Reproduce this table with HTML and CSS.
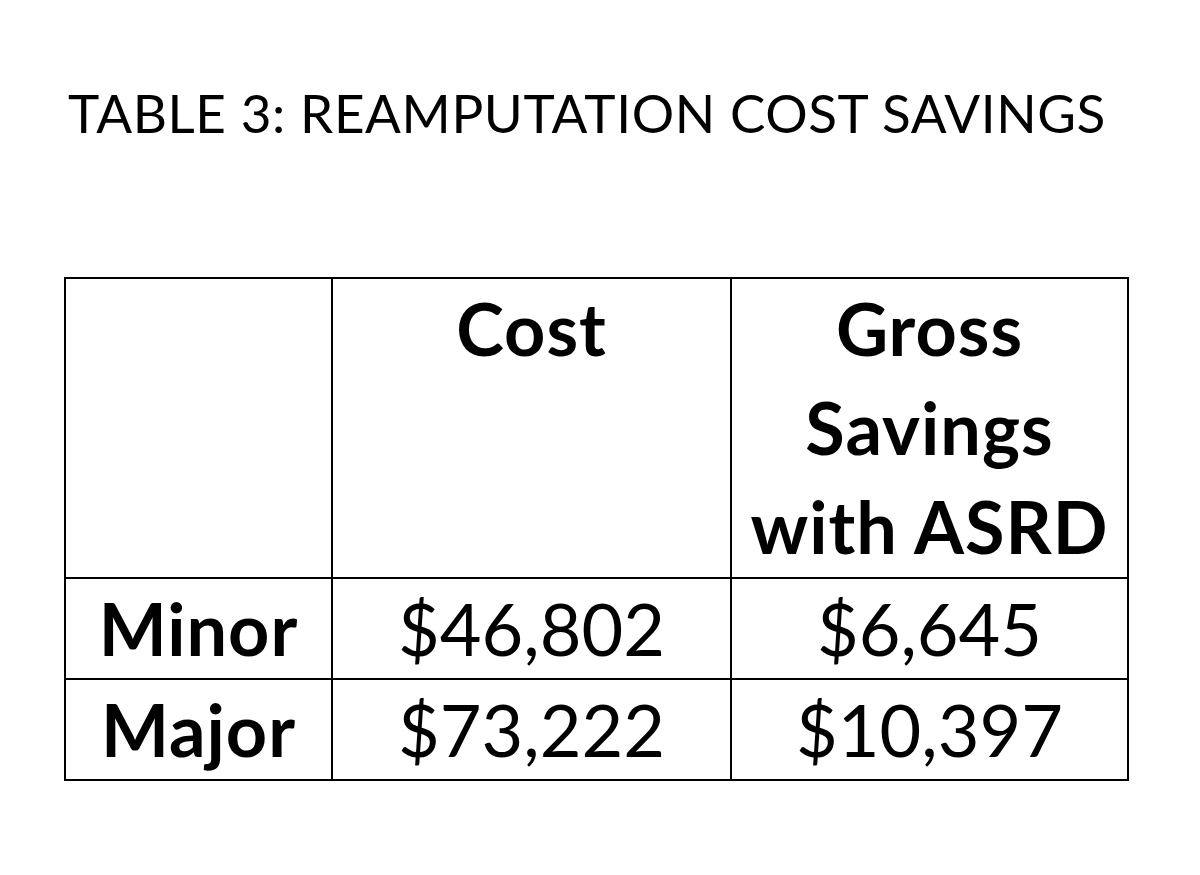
FILE: index.html
```html
<!DOCTYPE html>
<html lang="en">
<head>
<meta charset="utf-8">
<title>Table 3: Reamputation Cost Savings</title>
<link rel="stylesheet" href="styles.css">
</head>
<body>
<main class="slide">
  <h1 class="title">TABLE 3: REAMPUTATION COST SAVINGS</h1>
  <table class="data">
    <thead>
      <tr class="head-row">
        <th class="c1"></th>
        <th class="c2">Cost</th>
        <th class="c3">Gross<br>Savings<br>with ASRD</th>
      </tr>
    </thead>
    <tbody>
      <tr class="body-row">
        <th class="c1">Minor</th>
        <td class="c2">$46,802</td>
        <td class="c3">$6,645</td>
      </tr>
      <tr class="body-row">
        <th class="c1">Major</th>
        <td class="c2">$73,222</td>
        <td class="c3">$10,397</td>
      </tr>
    </tbody>
  </table>
</main>
</body>
</html>
```
FILE: styles.css
```css
html, body {
  margin: 0;
  padding: 0;
  background: #fff;
}
body {
  width: 1200px;
  height: 875px;
  overflow: hidden;
  color: #000;
  font-family: Lato, "Open Sans", "Liberation Sans", sans-serif;
}
.slide {
  padding: 86px 0 0 64px;
}
.title {
  margin: 0 0 138px 4px;
  font-size: 53px;
  line-height: 53px;
  font-weight: 400;
  letter-spacing: 0.6px;
  white-space: nowrap;
}
.data {
  border-collapse: collapse;
  width: 1057px;
  table-layout: fixed;
}
.data th, .data td {
  border: 2px solid #000;
  padding: 0;
  text-align: center;
  vertical-align: top;
  font-size: 72px;
  line-height: 99px;
  white-space: nowrap;
}
.data th {
  font-weight: 700;
  letter-spacing: 1px;
}
.data td {
  font-weight: 400;
}
.c1 { width: 265px; }
.c2 { width: 397px; }
.c3 { width: 395px; }
.head-row { height: 300px; }
.body-row { height: 100px; }
```
